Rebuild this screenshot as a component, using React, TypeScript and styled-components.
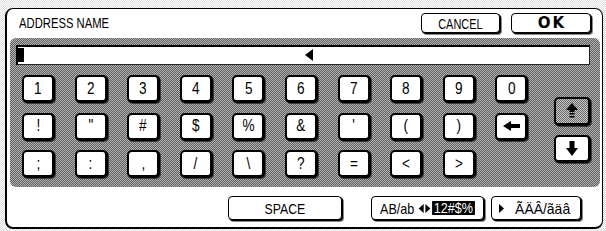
import React from 'react'
import styled, { createGlobalStyle } from 'styled-components'

const GlobalStyle = createGlobalStyle`
  html, body {
    margin: 0;
    padding: 0;
  }
  body {
    background-color: #fff;
    background-image: repeating-conic-gradient(#dcdcdc 0 25%, #ffffff 0 50%);
    background-size: 2px 2px;
    font-family: "Liberation Sans", Arial, sans-serif;
    color: #000;
  }
`

const Screen = styled.div`
  width: 606px;
  height: 231px;
  box-sizing: border-box;
  padding: 8px 3px 2px 5px;
`

const Panel = styled.div`
  height: 100%;
  box-sizing: border-box;
  display: flex;
  flex-direction: column;
  background: #fff;
  border: 1px solid #000;
  border-left-width: 2px;
  border-bottom-width: 2px;
  border-radius: 8px;
`

// the panel uses a thin narrow face; squeeze Liberation Sans to match
const Narrow = styled.span<{ $s: number }>`
  display: inline-flex;
  align-items: center;
  white-space: nowrap;
  transform: scaleX(${p => p.$s});
`

const Header = styled.div`
  height: 29px;
  box-sizing: border-box;
  display: flex;
  align-items: flex-start;
  padding: 4px 11px 0 12px;
`

const Title = styled.div`
  flex: 1;
  height: 20px;
  display: flex;
  align-items: center;
`

const TitleText = styled.span`
  display: inline-block;
  font-size: 15px;
  line-height: 20px;
  white-space: nowrap;
  transform: scaleX(0.75);
  transform-origin: 0 50%;
`

const TopButton = styled.div<{ $w: number; $bold?: boolean }>`
  width: ${p => p.$w}px;
  height: 20px;
  box-sizing: border-box;
  margin-left: 11px;
  display: flex;
  align-items: center;
  justify-content: center;
  background: #fff;
  border: 1px solid #000;
  border-radius: 4px;
  box-shadow: 1px 1px 0 #000, 2px 2px 0 #8a8a8a;
  font-size: 15px;
  font-family: ${p => (p.$bold ? '"DejaVu Sans", "Liberation Sans", sans-serif' : 'inherit')};
  font-weight: ${p => (p.$bold ? 700 : 400)};
  letter-spacing: ${p => (p.$bold ? 2 : 0)}px;
  text-indent: ${p => (p.$bold ? 2 : 0)}px;
`

const KeyArea = styled.div`
  height: 149px;
  box-sizing: border-box;
  margin: 0 2px 0 3px;
  padding: 7px 10px 0 6px;
  background-color: #8a8a8a;
  background-image: repeating-conic-gradient(#5e5e5e 0 25%, #b4b4b4 0 50%);
  background-size: 2px 2px;
  border-radius: 6px;
`

const Input = styled.div`
  height: 20px;
  box-sizing: border-box;
  display: flex;
  align-items: flex-start;
  background: #fff;
  border: 2px solid #000;
  border-right: 1px solid #222;
  border-bottom: 1px solid #222;
`

const Cursor = styled.div`
  width: 6px;
  height: 14px;
  margin-top: 1px;
  background: #000;
`

const Marker = styled.div`
  width: 0;
  height: 0;
  margin: 2px 0 0 281px;
  border-right: 8px solid #000;
  border-top: 6px solid transparent;
  border-bottom: 6px solid transparent;
`

const KeysRow = styled.div`
  display: flex;
  padding: 10px 0 0 6px;
`

const KeyGrid = styled.div`
  display: grid;
  grid-template-columns: repeat(10, 33px);
  grid-auto-rows: 28px;
  column-gap: 19.6px;
  row-gap: 9.5px;
`

const Key = styled.div<{ $w?: number; $h?: number; $dim?: boolean }>`
  width: ${p => p.$w ?? 33}px;
  height: ${p => p.$h ?? 28}px;
  box-sizing: border-box;
  display: flex;
  align-items: center;
  justify-content: center;
  padding-bottom: 1px;
  background-color: #fff;
  background-image: ${p =>
    p.$dim ? 'repeating-conic-gradient(#6a6a6a 0 25%, #c8c8c8 0 50%)' : 'none'};
  background-size: 2px 2px;
  border: 2px solid #000;
  border-right-width: 3px;
  border-bottom-width: 3px;
  border-radius: 5px;
  box-shadow: 1px 1px 0 #3a3a3a;
  font-size: 17px;
  line-height: 1;
`

const Separator = styled.div`
  width: 1px;
  height: 103px;
  margin-left: 15px;
  background: #fff;
`

const ArrowCol = styled.div`
  display: flex;
  flex-direction: column;
  gap: 9px;
  padding-top: 22px;
  margin-left: 11px;
`

const Footer = styled.div`
  flex: 1;
  display: flex;
  justify-content: flex-end;
  align-items: flex-start;
  padding: 9px 21px 0 0;
`

const FootButton = styled.div<{ $w: number; $gap: number }>`
  width: ${p => p.$w}px;
  height: 24px;
  box-sizing: border-box;
  margin-left: ${p => p.$gap}px;
  display: flex;
  align-items: center;
  justify-content: center;
  background: #fff;
  border: 1px solid #000;
  border-radius: 4px;
  box-shadow: 1px 1px 0 #000, 2px 2px 0 #8a8a8a;
  font-size: 15px;
  white-space: nowrap;
`

const Highlight = styled.span`
  background: #000;
  color: #fff;
  padding: 0 2px;
  line-height: 14px;
`

const rows = [
  ['1', '2', '3', '4', '5', '6', '7', '8', '9', '0'],
  ['!', '"', '#', '$', '%', '&', "'", '(', ')', 'BS'],
  [';', ':', ',', '/', '\\', '?', '=', '<', '>'],
]

const BackArrow = () => (
  <svg width="17" height="10" viewBox="0 0 17 10">
    <polygon points="0,5 8,0 8,10" fill="#000" />
    <rect x="7" y="3" width="10" height="4" fill="#000" />
  </svg>
)

const UpArrow = () => (
  <svg width="12" height="15" viewBox="0 0 12 15">
    <polygon points="6,0 0,7 12,7" fill="#000" />
    <rect x="3.5" y="7" width="5" height="2" fill="#000" />
    <rect x="3.5" y="10" width="5" height="1.5" fill="#000" />
    <rect x="3.5" y="13" width="5" height="1.5" fill="#000" />
  </svg>
)

const DownArrow = () => (
  <svg width="12" height="15" viewBox="0 0 12 15">
    <rect x="3.5" y="0" width="5" height="7" fill="#000" />
    <polygon points="0,7 12,7 6,15" fill="#000" />
  </svg>
)

const Swap = () => (
  <svg width="14" height="9" viewBox="0 0 14 9" style={{ margin: '0 2px 0 5px' }}>
    <polygon points="0,4.5 6,0 6,9" fill="#000" />
    <polygon points="14,4.5 8,0 8,9" fill="#000" />
  </svg>
)

const Play = () => (
  <svg width="5" height="9" viewBox="0 0 5 9" style={{ marginRight: 9 }}>
    <polygon points="0,0 5,4.5 0,9" fill="#000" />
  </svg>
)

export default function App() {
  return (
    <>
      <GlobalStyle />
      <Screen>
        <Panel>
          <Header>
            <Title>
              <TitleText>ADDRESS NAME</TitleText>
            </Title>
            <TopButton $w={79}>
              <Narrow $s={0.73}>CANCEL</Narrow>
            </TopButton>
            <TopButton $w={80} $bold>
              OK
            </TopButton>
          </Header>
          <KeyArea>
            <Input>
              <Cursor />
              <Marker />
            </Input>
            <KeysRow>
              <KeyGrid>
                {rows.flatMap((row, r) =>
                  row.map((k, i) => (
                    <Key key={`${r}-${i}`}>
                      {k === 'BS' ? <BackArrow /> : <Narrow $s={0.8}>{k}</Narrow>}
                    </Key>
                  ))
                )}
              </KeyGrid>
              <Separator />
              <ArrowCol>
                <Key $w={37} $h={29} $dim>
                  <UpArrow />
                </Key>
                <Key $w={37} $h={28}>
                  <DownArrow />
                </Key>
              </ArrowCol>
            </KeysRow>
          </KeyArea>
          <Footer>
            <FootButton $w={114} $gap={0}>
              <Narrow $s={0.82}>SPACE</Narrow>
            </FootButton>
            <FootButton $w={113} $gap={29}>
              <Narrow $s={0.84}>
                AB/ab
                <Swap />
                <Highlight>12#$%</Highlight>
              </Narrow>
            </FootButton>
            <FootButton $w={90} $gap={7}>
              <Play />
              <Narrow $s={0.93}>ÃÄÂ/ãäâ</Narrow>
            </FootButton>
          </Footer>
        </Panel>
      </Screen>
    </>
  )
}
